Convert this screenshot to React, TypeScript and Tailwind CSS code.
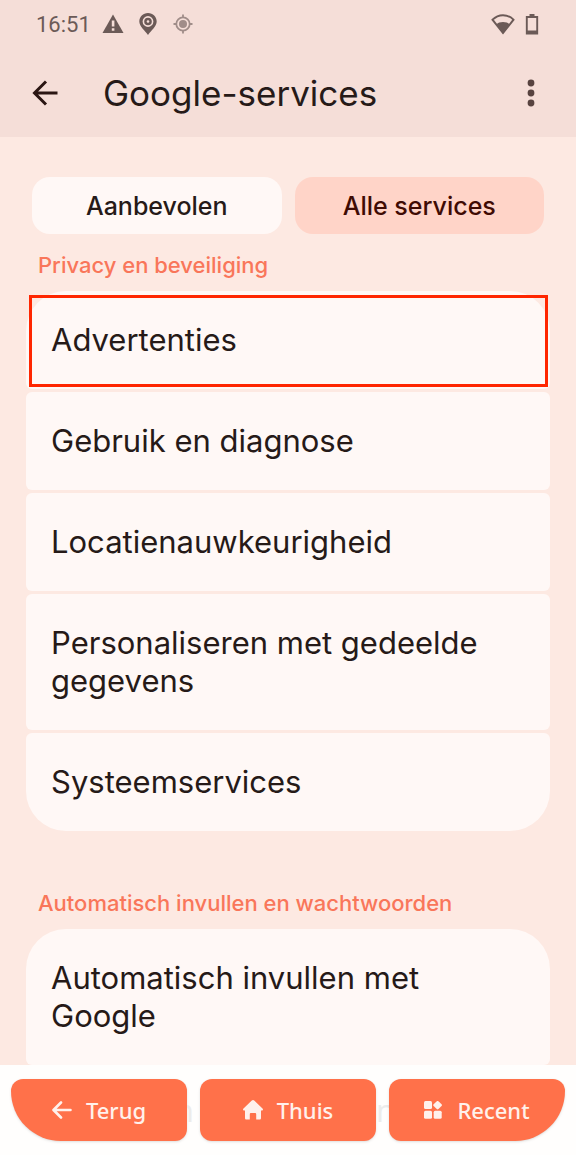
import type { ReactNode } from 'react';
import clsx from 'clsx';

const PRIVACY_ITEMS = [
  'Advertenties',
  'Gebruik en diagnose',
  'Locatienauwkeurigheid',
  'Personaliseren met gedeelde gegevens',
  'Systeemservices',
];

function StatusBar() {
  return (
    <div className="flex h-12 items-center pl-9 pr-9 text-[#6b5a57]">
      <span className="pt-[2px] font-[Roboto,sans-serif] text-[22px] leading-7">16:51</span>
      <svg viewBox="0 0 22 20" className="ml-[11px] h-5 w-[22px]" fill="currentColor">
        <path d="M11 0.5 21.5 19H0.5Z" />
        <path d="M9.800 6.500h2.600v6H9.800zM9.800 14.300h2.600v2.400H9.800z" fill="#f5ded8" />
      </svg>
      <svg viewBox="0 0 18 22" className="ml-[15px] h-[22px] w-[18px]" fill="currentColor">
        <path d="M9 0C4 0 .3 3.8.3 8.4.3 13.5 6 17.200 9 22c3-4.800 8.700-8.500 8.700-13.600C17.700 3.800 14 0 9 0Z" />
        <circle cx="9" cy="8.500" r="4.600" fill="none" stroke="#f5ded8" strokeWidth="1.600" />
        <circle cx="9" cy="8.500" r="1.300" fill="#f5ded8" />
      </svg>
      <svg viewBox="0 0 20 20" className="ml-4 h-5 w-5 text-[#a08d89]" fill="none" stroke="currentColor" strokeWidth="1.800">
        <circle cx="10" cy="10" r="6.700" />
        <path d="M10 .5v3M10 16.500v3M.5 10h3M16.500 10h3" />
        <circle cx="10" cy="10" r="4" fill="currentColor" stroke="none" />
      </svg>
      <svg viewBox="0 0 24 21" className="ml-auto h-[21px] w-6" fill="currentColor">
        <path d="M1.500 5.700C7.500-.3 16.500-.3 22.500 5.700L12 19Z" fill="none" stroke="currentColor" strokeWidth="1.900" />
        <path d="M5.500 10.500C8 7.300 16 7.300 18.500 10.500L12 19.800Z" />
      </svg>
      <svg viewBox="0 0 14 21" className="ml-[10px] mr-[1px] h-[21px] w-[14px]" fill="currentColor">
        <path d="M4.500 0h5v3h-5z" />
        <path d="M1.800 3h10.400v16.500H1.800z" fill="none" stroke="currentColor" strokeWidth="1.900" />
        <path d="M1.500 16.500h11V20h-11z" />
      </svg>
    </div>
  );
}

function SectionLabel({ children }: { children: ReactNode }) {
  return (
    <h2 className="flex h-[57px] items-center px-3 pt-1 text-[22px] font-medium leading-7 text-[#f9765a]">
      {children}
    </h2>
  );
}

function ListItem({ label, first, last, highlighted }: { label: string; first?: boolean; last?: boolean; highlighted?: boolean }) {
  return (
    <li className="relative">
      <button
        type="button"
        className={clsx(
          'w-full rounded-md bg-[#fff8f6] px-[25px] py-[30px] text-left text-[31px] leading-[38px] text-[#261a18]',
          first && 'rounded-t-[40px]',
          last && 'rounded-b-[40px]'
        )}
      >
        {label}
      </button>
      {highlighted && (
        <div className="pointer-events-none absolute bottom-[2px] left-[3px] right-[2px] top-1 border-3 border-[#ff2600]" />
      )}
    </li>
  );
}

export default function App() {
  return (
    <div className="flex min-h-screen flex-col bg-[#fde9e2] font-[Inter,sans-serif] text-[#261a18]">
      <header className="bg-[#f5ded8]">
        <StatusBar />
        <div className="flex h-[89px] items-center pl-8 pr-8">
          <button type="button" aria-label="Terug">
            <svg viewBox="0 0 26 26" className="h-[26px] w-[26px]" fill="none" stroke="#2b1613" strokeWidth="3">
              <path d="M25.500 13H2.500M14 1.500 2.500 13 14 24.500" />
            </svg>
          </button>
          <h1 className="ml-[45px] flex-1 text-[35px] leading-10">Google-services</h1>
          <button type="button" aria-label="Meer opties" className="flex w-[26px] justify-center">
            <svg viewBox="0 0 8 28" className="h-7 w-2" fill="#584340">
              <circle cx="4" cy="4" r="3.400" />
              <circle cx="4" cy="14" r="3.400" />
              <circle cx="4" cy="24" r="3.400" />
            </svg>
          </button>
        </div>
      </header>

      <main className="flex-1 px-[26px] pt-10">
        <div className="mx-[6px] flex gap-[13px] text-[25px] font-medium leading-8">
          <button type="button" className="h-[57px] flex-1 rounded-[18px] bg-[#fff8f6]">
            Aanbevolen
          </button>
          <button type="button" className="h-[57px] flex-1 rounded-[18px] bg-[#ffd4c8] text-[#3f0b04]">
            Alle services
          </button>
        </div>

        <section>
          <SectionLabel>Privacy en beveiliging</SectionLabel>
          <ul className="flex flex-col gap-[3px]">
            {PRIVACY_ITEMS.map((item, i) => (
              <ListItem
                key={item}
                label={item}
                first={i === 0}
                last={i === PRIVACY_ITEMS.length - 1}
                highlighted={i === 0}
              />
            ))}
          </ul>
        </section>

        <section className="mt-[41px]">
          <SectionLabel>Automatisch invullen en wachtwoorden</SectionLabel>
          <ul>
            <ListItem label="Automatisch invullen met Google" first />
          </ul>
        </section>
      </main>

      <nav className="flex bg-[#fffefd] px-[11px] py-[14px] font-['Noto_Sans',sans-serif] text-[22px] font-medium leading-7 text-[#fff1ec]">
        <button type="button" className="flex h-[62px] flex-1 items-center justify-center gap-[14px] rounded-xl rounded-bl-[50px] bg-[#ff714a] shadow-sm">
          <svg viewBox="0 0 20 18" className="h-[18px] w-5" fill="none" stroke="currentColor" strokeWidth="2.600" strokeLinecap="round" strokeLinejoin="round">
            <path d="M18.500 9H2M9 1.500 1.500 9 9 16.500" />
          </svg>
          Terug
        </button>
        <div className="flex w-[13px] items-center justify-end overflow-hidden pr-[6px] text-[31px] font-normal text-[#ececec]" aria-hidden="true">
          n
        </div>
        <button type="button" className="flex h-[62px] flex-1 items-center justify-center gap-[14px] rounded-xl bg-[#ff714a] shadow-sm">
          <svg viewBox="0 0 20 20" className="h-5 w-5" fill="currentColor">
            <path d="M8.800.6a1.800 1.800 0 0 1 2.400 0l8.300 7.800c.9.900.4 2-.7 2h-.8v7.600c0 1-.6 1.600-1.500 1.600h-3.300v-5.200c0-.9-.5-1.400-1.400-1.400H8.200c-.9 0-1.400.5-1.400 1.400v5.200H3.500C2.600 19.600 2 19 2 18v-7.600h-.8c-1.100 0-1.600-1.100-.7-2Z" />
          </svg>
          Thuis
        </button>
        <div className="flex w-[13px] items-center justify-start overflow-hidden text-[31px] font-normal text-[#ececec]" aria-hidden="true">
          n
        </div>
        <button type="button" className="flex h-[62px] flex-1 items-center justify-center gap-[15px] rounded-xl rounded-br-[50px] bg-[#ff714a] shadow-sm">
          <svg viewBox="0 0 18 18" className="h-[18px] w-[18px]" fill="currentColor">
            <rect x="0" y="0" width="8" height="8" rx="1.500" />
            <rect x="0" y="9.700" width="8" height="8" rx="1.500" />
            <rect x="9.700" y="9.700" width="8" height="8" rx="1.500" />
            <rect x="10.200" y="0.700" width="6.800" height="6.800" rx="1.200" transform="rotate(45 13.600 4.100)" />
          </svg>
          Recent
        </button>
      </nav>
    </div>
  );
}
